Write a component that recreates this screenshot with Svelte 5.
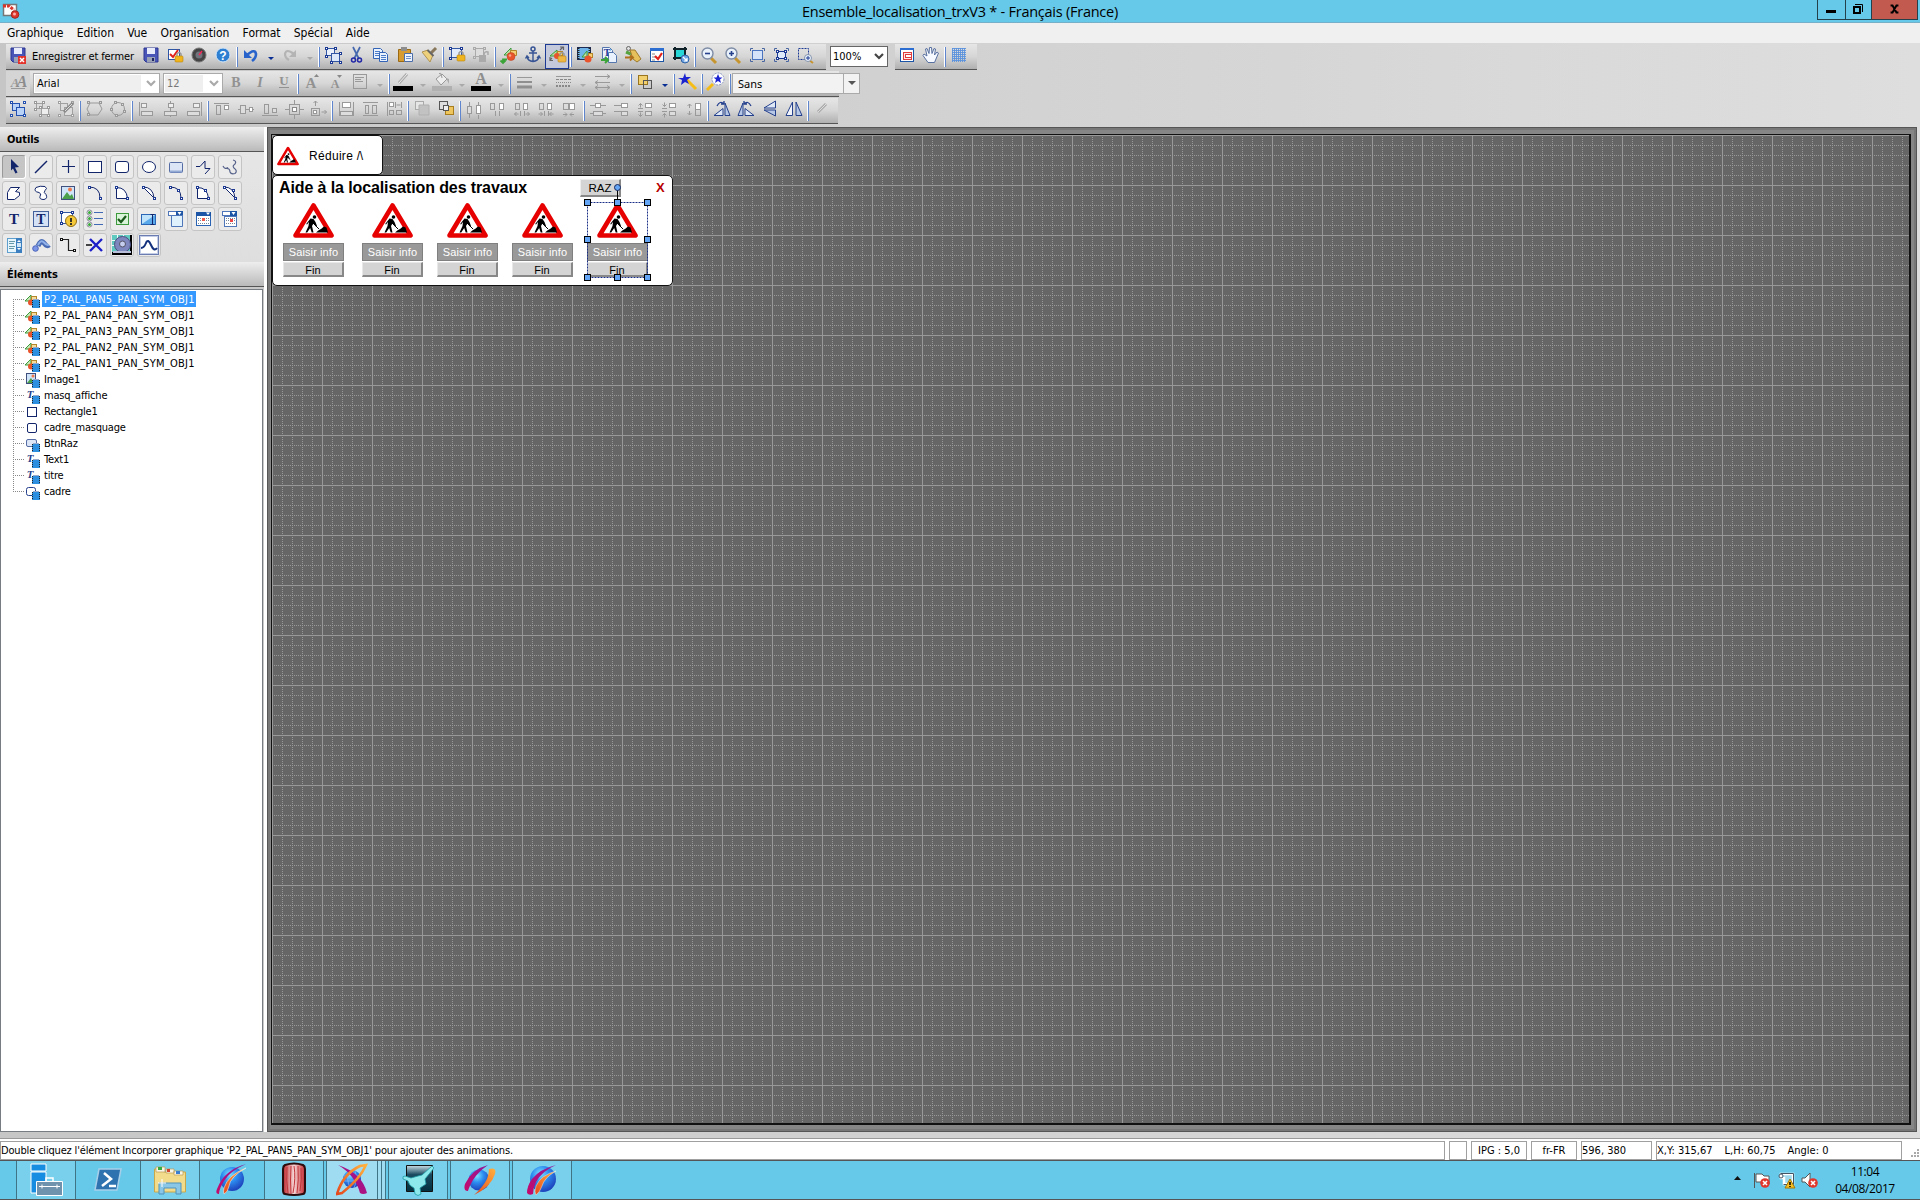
<script>
  const P = '#1c3a94';
  const sq = (x, y, s = 3, c = P, f = '#fff') => `<rect x="${x + 0.5}" y="${y + 0.5}" width="${s - 1}" height="${s - 1}" fill="${f}" stroke="${c}"/>`;
  const box = (x, y, w, h, c = '#999', f = 'none') => `<rect x="${x + 0.5}" y="${y + 0.5}" width="${w - 1}" height="${h - 1}" fill="${f}" stroke="${c}"/>`;
  const ln = (d, c = '#999', w = 1, x = '') => `<path d="${d}" fill="none" stroke="${c}" stroke-width="${w}" ${x}/>`;
  const fl = (d, c, s = 'none') => `<path d="${d}" fill="${c}" stroke="${s}"/>`;
  const lock = (x, y, c = '#f0b41c') => `<path d="M${x + 2} ${y + 3}v-2q2-3 4 0v2" fill="none" stroke="#999" stroke-width="1.5"/><rect x="${x}" y="${y + 3}" width="8" height="6" rx="1" fill="${c}" stroke="#b98512" stroke-width=".6"/>`;
  const floppy = fl('M5 5h14v14H7l-2-2z', '#4a55b8', '#2d3690') + fl('M8 5h8v6H8z', '#e8ecfa') + fl('M8 14h8v5H8z', '#9aa3b5') + fl('M13 15h2v3h-2z', '#1f2460');
  const shapes = fl('M7 12l7-7v7z', '#b9e0a5', '#3d9a3d') + fl('M13.500 7.500h6v5h-6z', '#f5cf72', '#b3862a') + '<circle cx="14" cy="13.500" r="4" fill="#e8542c" stroke="#b93c1e" stroke-width=".5"/><circle cx="13" cy="12.500" r="1.300" fill="#f9a58e"/>';
  const lens = (s) => '<path d="M14 15l5 5" stroke="#c7952f" stroke-width="3"/><circle cx="10.500" cy="10.500" r="5.500" fill="#e9f1fb" stroke="#7d8ba5" stroke-width="1.400"/>' + ln(s, '#25408c', 1.6);
  const glyph = (t, x, y, s, c, e = '') => `<text x="${x}" y="${y}" font-size="${s}" fill="${c}" text-anchor="middle" font-family="Liberation Serif, serif" font-weight="bold" ${e}>${t}</text>`;
  const corners = (a, b, s, c = P) => sq(a, a, s, c) + sq(b, a, s, c) + sq(a, b, s, c) + sq(b, b, s, c);
  const groupIco = (c, f) => box(6, 6, 8, 8, c, f) + box(10, 10, 9, 9, c, f) + corners(4, 17, 3, c);
  const copyIco = box(5, 5, 9, 8, '#3457a3', '#eaf1fc') + box(10, 10, 9, 9, '#3457a3', '#dde8fa') + sq(4, 4) + sq(13, 4) + sq(4, 12) + sq(18, 9) + sq(9, 18) + sq(18, 18);

  const icons = {
    drop: fl('M5 14h6l-3 3z', '#0a2f94'),
    dropOff: fl('M5 14h6l-3 3z', '#a9a9a9'),
    saveClose: floppy + fl('M12 13h8v8h-8z', '#e3342b') + ln('M14 15l4 4m0-4l-4 4', '#fff', 1.5),
    save: floppy,
    checkLock: box(5, 6, 12, 11, '#2d56a5', '#fff') + ln('M7 11l3 3 5-7', '#e0221b', 2) + lock(12, 10),
    gauge: '<circle cx="12" cy="12" r="7" fill="#444" stroke="#777"/><circle cx="12" cy="12" r="3.500" fill="#70747c"/>' + ln('M12 12l3-4', '#f25', 1.3),
    help: '<circle cx="12" cy="12" r="7" fill="#2e7fd1" stroke="#d5e6f7"/><text x="12" y="16.500" font-size="12" font-weight="bold" fill="#fff" text-anchor="middle" font-family="Liberation Sans">?</text>',
    undo: ln('M8 12q8-7 9-1 0 4-4 7', '#2863cc', 2.6) + fl('M5 7v8h8z', '#2863cc'),
    redo: ln('M16 11q-8-6-9 0 0 4 4 6', '#b4b4b4', 2.2) + fl('M18 7v7h-7z', '#b4b4b4'),
    group: copyIco,
    cut: ln('M8 4l6 12M15 4L9 16', '#4567ae', 1.7) + '<circle cx="8.500" cy="17" r="2" fill="none" stroke="#2328a6" stroke-width="1.500"/><circle cx="14.500" cy="17" r="2" fill="none" stroke="#2328a6" stroke-width="1.500"/>',
    copy: fl('M4.500 5.500h7l2 2v8h-9z', '#eaf2fd', '#3464b5') + fl('M10.500 9.500h6l2 2v7h-8z', '#eaf2fd', '#3464b5') + ln('M6 8.500h5m-5 2h4m-4 2h4m2 0h5m-5 2h5m-5 2h5', '#4a7cc9'),
    paste: fl('M5.500 6.500h12v12h-12z', '#d69b31', '#9a6914') + fl('M8 4h6v4H8z', '#8d8d8d') + fl('M11.500 10.500h8v8h-8z', '#eef4fd', '#4b6ea9') + ln('M13 13.500h5m-5 2h5', '#6d8fc9'),
    brush: ln('M19 5l-5 5', '#88775a', 3) + fl('M5 9l6-2 5 5-3 7z', '#ecd07c', '#b09352') + ln('M10.500 7l6 6', '#666', 2),
    lockObj: box(6, 5, 11, 10, '#3457a3', '#e2ebfb') + sq(4, 4) + sq(15, 4) + sq(4, 14) + lock(12, 9),
    unlockObj: box(6, 5, 9, 9, '#aaa', '#ddd') + sq(4, 4, 3, '#aaa', '#ddd') + sq(14, 4, 3, '#aaa', '#ddd') + sq(4, 13, 3, '#aaa', '#ddd') + fl('M10 12h7v7h-7z', '#aaa') + ln('M15 12q0-4 4-3v3', '#aaa', 1.5),
    insShape: shapes + ln('M10 16.500H6v3m-2.500-2l2.500 2.500 2.500-2.500', '#3ba438', 1.8),
    anchor: '<circle cx="12" cy="6" r="2" fill="none" stroke="#365394" stroke-width="1.500"/>' + ln('M12 8v10M8 10h8M6 14q1 4 6 4.500 5-.5 6-4.500M4.500 15.500l1.500-2.500 2 2m11.500.5L18 13l-2 2', '#365394', 1.4),
    linkShape: fl('M5 13l7-6v6z', '#b9e0a5', '#3d9a3d') + box(12, 8, 6, 5, '#b3862a', '#f5cf72') + '<circle cx="12" cy="13" r="3" fill="#e8542c"/>' + ln('M15 7l3-3m-3 0h3.500v3M7 15l-2 2m0-3v3.500h3', '#666', 1.2) + lock(13, 10, '#eeb643'),
    film: box(4, 4, 14, 13, '#1c2c54', '#6fb4e8') + ln('M5.500 5v12M16.500 5v12', '#222', 2, 'stroke-dasharray="1 1"') + fl('M9 14l5-6v6z', '#b9e0a5', '#3d9a3d') + box(15, 10, 5, 5, '#b3862a', '#f5cf72') + '<circle cx="15" cy="16" r="3.500" fill="#e8542c"/>',
    docs: fl('M5.500 4.500h7l3 3v8h-10z', '#eaf2fd', '#5577ad') + fl('M11.500 9.500h5l3 3v7h-8z', '#eaf2fd', '#5577ad') + glyph('T', 10, 13, 10, P) + ln('M4 17h6m-2-3l3 3-3 3', '#3ba438', 2),
    tags: '<circle cx="7.500" cy="5.500" r="2" fill="none" stroke="#666"/>' + ln('M5 9l5 2', '#57a33e', 3) + fl('M9 7l5 0 6 9-4 3-4-3z', '#e6c05a', '#9d7a2f') + ln('M4 14.500h7m-2-2l3 2-3 3', '#b06f1b', 1.8),
    checkWin: box(5, 5, 14, 14, '#1c55a5', '#fff') + fl('M5 5h14v3H5z', '#2b6dd0') + ln('M7 11h3m-3 3h3m-3 3h3', '#888') + ln('M10 13l3 3 4-6', '#e0221b', 2.2),
    capture: fl('M6 6h10v9H6z', '#27d6d6') + ln('M4 6h14M6 4v13M16 4v9M4 15h10', '#10222a', 2) + '<circle cx="16" cy="16" r="4" fill="#6fa7e6" stroke="#3363a5"/>' + ln('M14 14l4 4m0-3v3h-3', '#fff', 1.2),
    zoomOut: lens('M8 10.500h5'),
    zoomIn: lens('M8 10.500h5M10.500 8v5'),
    fit: box(7, 7, 11, 10, '#4a74bd', '#d3e2f8') + ln('M5.500 8V5.500H8m9 0h2.500V8m0 8v2.500H17m-9 0H5.500V16', '#4a66a0'),
    fitSel: box(8, 8, 9, 8, P, '#dfeafa') + sq(7, 7) + sq(15, 7) + sq(7, 14) + sq(15, 14) + ln('M5.500 8V5.500H8m9 0h2.500V8m0 8v2.500H17m-9 0H5.500V16', '#4a66a0'),
    zoomArea: ln('M5.500 5.500h10v11h-10z', P, 1, 'stroke-dasharray="2 1"') + ln('M16 17l4 3', '#c7952f', 2) + '<circle cx="15" cy="15" r="3.500" fill="#e9f1fb" stroke="#8593ab"/>' + ln('M13 15h4m-2-2v4', P),
    winRed: box(5, 5, 14, 14, '#1c55a5', '#fff') + fl('M5 5h14v2H5z', '#2b6dd0') + box(8, 9, 9, 8, '#e03a3a', '#fde8e8') + box(10, 11, 7, 4, '#e03a3a', '#fff'),
    hand: fl('M9 19.500l-5-7 1-1.500 3 2-1.500-7 1.500-.5 2 5 .5-6h2l.5 6 2-5 1.500.5-1 6 2.500-3 1.500 1-4 9.500z', '#f6f9ff', '#58709f'),
    mesh: '<path d="M5.500 5v14m2-14v14m2-14v14m2-14v14m2-14v14m2-14v14m2-14v14M5 5.500h14m-14 2h14m-14 2h14m-14 2h14m-14 2h14m-14 2h14m-14 2h14" stroke="#5b92dc" stroke-width=".9"/>',
    fontA: glyph('A', 9, 17, 13, '#999', 'font-style="italic"') + glyph('A', 16, 17, 16, '#8c8c8c', 'font-style="italic"') + ln('M5 18.500h14'),
    B: glyph('B', 12, 16.5, 14, '#929292'), I: glyph('I', 12, 16.5, 14, '#929292', 'font-style="italic"'), U: glyph('U', 12, 15, 13, '#929292') + ln('M7 17.500h10', '#929292'),
    bigger: glyph('A', 11, 18, 15, '#929292') + fl('M14 7h5l-2.500-3z', '#888'), smaller: glyph('A', 11, 18, 12, '#929292') + fl('M13 5h5l-2.500 3z', '#888'),
    align: box(5, 4, 14, 15) + ln('M7 7.500h9m-9 2h6m-6 2h8', '#999'),
    pen: ln('M8 13l8-9', '#aaa', 3) + ln('M8 13l8-9', '#eee') + fl('M2 16h20v5H2z', '#000'),
    fill: fl('M6 9l6-5 5 5-6 6z', '#eee', '#999') + ln('M9 4q2-3 3 4', '#999') + fl('M16 8l3 1v5z', '#aaa') + fl('M2 16h20v5H2z', '#b0b0b0'),
    ink: glyph('A', 12, 14, 16, '#8e8e8e') + fl('M2 16h20v5H2z', '#000'),
    lines: ln('M5 7.500h15') + ln('M5 12h15', '#8f8f8f', 2) + ln('M5 17h15', '#8f8f8f', 3),
    dashes: ln('M5 6.500h15') + ln('M5 9.500h15', '#888', 1, 'stroke-dasharray="3 1"') + ln('M5 12.500h15', '#888', 1, 'stroke-dasharray="1 1"') + ln('M5 16h15', '#888', 2, 'stroke-dasharray="2 1"'),
    arrows: ln('M5 6.500h15m-3-2l3 2-3 2M20 12.500H5m3-2l-3 2 3 2m-3 3h15m-12-2l-3 2 3 2m9-4l3 2-3 2'),
    layers: box(10, 10, 9, 9, '#555', '#ccc') + box(5, 5, 10, 10, '#9a7520', '#f2d06e') + box(10, 10, 9, 9, '#555'),
    wand: ln('M10 9l10 10', '#f6bd16', 3) + fl('M9 3l1 4 5 0-4 3 2 4-4-2-4 3 1-5-4-2h5z', '#1a23cf'),
    find: ln('M9 14l-6 6', '#f3bb18', 3) + '<circle cx="14" cy="9" r="6" fill="#fff" stroke="#8794c0" stroke-dasharray="2 1"/>' + fl('M14 4l1.500 3.500h3l-2.500 2 1 3.500-3-2-3 2 1-3.500-2.500-2h3z', '#1a23cf'),
    groupSel: groupIco('#2450b0', '#b9d2f8'),
    ungroup: box(6, 6, 7, 6, '#a0a0a0', '#ddd') + box(11, 11, 8, 7, '#a0a0a0', '#eee') + sq(4, 4, 3, '#999') + sq(12, 4, 3, '#999') + sq(4, 11, 3, '#999') + sq(9, 9, 3, '#999') + sq(17, 9, 3, '#999') + sq(9, 17, 3, '#999') + sq(17, 17, 3, '#999'),
    editGroup: groupIco('#a0a0a0', '#ddd') + ln('M10 15l9-9', '#888', 3) + ln('M11 14l7-7', '#ddd'),
    poly1: ln('M8 6h9l3 6-4 6H8l-3-6z') + sq(5, 4, 3, '#999', '#ddd') + sq(17, 4, 3, '#999', '#ddd') + sq(5, 16, 3, '#999', '#ddd'),
    poly2: '<circle cx="12" cy="12" r="6.500" fill="none" stroke="#999"/>' + sq(8, 4, 3, '#999', '#ddd') + sq(15, 6, 3, '#999', '#ddd') + sq(17, 13, 3, '#999', '#ddd') + sq(4, 11, 3, '#999', '#ddd') + sq(9, 17, 3, '#999', '#ddd'),
    alL: ln('M5.500 5v14') + box(7, 6, 6, 5, '#999', '#eee') + box(7, 14, 12, 5, '#999', '#ddd'),
    alC: ln('M12.500 4v16') + box(10, 6, 6, 5, '#999', '#eee') + box(6, 14, 13, 5, '#999', '#ddd'),
    alR: ln('M19.500 5v14') + box(11, 6, 7, 5, '#999', '#eee') + box(5, 14, 13, 5, '#999', '#ddd'),
    alT: ln('M4 6.500h15') + box(6, 8, 5, 10) + box(14, 8, 5, 5, '#999', '#fff'),
    alM: ln('M4 12.500h16') + box(6, 8, 6, 9, '#999', '#ddd') + box(15, 10, 4, 5, '#999', '#fff'),
    alB: ln('M4 18.500h16') + box(6, 7, 5, 10) + box(14, 11, 5, 5, '#999', '#ddd'),
    center: box(7, 7, 11, 11) + box(10, 10, 5, 5, '#888', '#fff') + ln('M12.500 3v4m0 11v4M3 12.500h4m11 0h4'),
    moveTo: box(5, 11, 9, 8) + box(7, 13, 4, 4, '#999', '#fff') + ln('M9.500 9V4m-2 2l2-2 2 2m4 9h5m-2-2l2 2-2 2'),
    sameW: ln('M5.500 5v14m14-14v14') + box(8, 5, 9, 6, '#999', '#fff') + box(6, 14, 13, 5, '#999', '#ddd'),
    sameH: ln('M5 5.500h15m-15 13h15') + box(7, 8, 4, 9) + box(14, 8, 5, 9),
    sameB: ln('M5.500 5v14') + box(7, 5, 5, 5, '#999', '#fff') + box(7, 13, 5, 5) + box(14, 13, 6, 5) + ln('M13.500 5v6m6-6v6m-5-3h4'),
    front: box(5, 4, 9, 9, '#aaa', '#e6e6e6') + fl('M9 8h10v10H9z', '#c2c2c2', '#b0b0b0'),
    back: box(5, 4, 9, 9, '#555', '#ddd') + box(11, 9, 9, 9, '#a87d1d', '#efc55d') + box(9, 8, 6, 6, '#555', '#eee'),
    h1: ln('M7.500 5v4m0 8v4m9-16v3m0 10v4') + box(5, 9, 5, 8, '#999', '#ddd') + box(14, 8, 5, 9, '#999', '#fff'),
    h2: box(4, 6, 5, 7) + box(13, 6, 5, 7, '#999', '#fff') + ln('M9.500 14v5m4-5v5'),
    h3: box(5, 6, 5, 7) + box(13, 6, 5, 7, '#999', '#fff') + ln('M10.500 14v5m4-5v5m-10-2h4m-2-2l-2 2 2 2m13-2h-4m2-2l2 2-2 2'),
    h4: box(5, 6, 5, 7) + box(13, 6, 5, 7, '#999', '#fff') + ln('M10.500 14v5m4-5v5m-10-2h4m-2-2l2 2-2 2m13-2h-4m2-2l-2 2 2 2'),
    h5: box(5, 6, 6, 7) + box(11, 6, 6, 7, '#999', '#fff') + ln('M5 17.500h4m-2-2l2 2-2 2m9-2h-4m2-2l-2 2 2 2'),
    v1: ln('M4 8.500h16M4 16.500h16') + box(9, 6, 6, 5, '#999', '#fff') + box(7, 14, 10, 5, '#999', '#ddd'),
    v2: ln('M4 8.500h7m-7 6h7') + box(11, 6, 7, 5, '#999', '#fff') + box(11, 14, 7, 5, '#999', '#ddd'),
    v3: ln('M4 11.500h5m-5 3h5m-2.500-8v4m-2-2l2-2 2 2m-2 7v4m-2-2l2 2 2-2') + box(11, 6, 7, 5, '#999', '#fff') + box(11, 14, 7, 5, '#999', '#ddd'),
    v4: ln('M4 11.500h5m-5 3h5m-2.500-9v4m-2-2l2 2 2-2m-2 9v4m-2-2l2-2 2 2') + box(11, 6, 7, 5, '#999', '#fff') + box(11, 14, 7, 5, '#999', '#ddd'),
    v5: ln('M7.500 7v4m-2-2l2-2 2 2m-2 5v4m-2-2l2 2 2-2') + box(13, 6, 6, 7, '#999', '#fff') + box(13, 12, 6, 7),
    rotL: fl('M4 18.500h9l0-7z', '#dfe8f7', '#25408c') + fl('M15 6v12.500h5z', '#b6c8e6', '#25408c') + ln('M7 9q3-6 7-2m-3 0h3V4', '#25408c', 1.3),
    rotR: fl('M11 18.500h9l-9-7z', '#dfe8f7', '#25408c') + fl('M9 6v12.500H4z', '#b6c8e6', '#25408c') + ln('M17 9q-3-6-7-2m3 0h-3V4', '#25408c', 1.3),
    flipV: fl('M17.500 4v7H6z', '#dfe8f7', '#25408c') + fl('M17.500 19v-6H6z', '#b6c8e6', '#25408c'),
    flipH: fl('M10.500 5v13.500H4z', '#f2f6fc', '#25408c') + fl('M14 5v13.500h6z', '#b6c8e6', '#25408c'),
    pencil: ln('M8 15l8-8', '#aaa', 3) + ln('M8 15l8-8', '#ddd'),
    cursor: fl('M9 4l8 8-4 .5 2.500 5-2 1-2.500-5-2 2z', '#12256b'),
    line: ln('M6 18L18 6', '#12256b', 1.4), plus: ln('M6 11.500h13M12.500 5v13', '#12256b', 1.2),
    rect: box(5, 6, 14, 12, '#12256b', '#fff'), rrect: '<rect x="5.500" y="6.500" width="13" height="11" rx="2.500" fill="#fff" stroke="#12256b"/>',
    oval: '<ellipse cx="12" cy="12" rx="6.500" ry="5.500" fill="#fff" stroke="#12256b"/>',
    btn: '<rect x="5.500" y="7.500" width="13" height="10" rx="1" fill="#dbe5f5" stroke="#556ca5"/>' + ln('M6 16.500h12', '#93a8d2', 2),
    zig: ln('M5 11.500h4l5-5.500v7.500h5l-5 5.500', '#12256b'),
    squig: ln('M5 11q2 4 5 1.500M15 5q4 1 2 4-3 2-1 4 4 3 1 5.500-4 1-5-1.500 0-4-4-3.500', '#56618a', 1.2),
    poly: fl('M8.500 6.500h9l-4 4 4 1v3l-5 4h-7v-7z', '#fff', '#12256b'),
    blob: fl('M7 6.500q4-2 9-1 3 2 0 4-2 2 1 4 2 4-2 5-5 0-4-3 2-3-1-4-6-1-3-5z', '#fff', '#12256b'),
    image: box(5, 5, 14, 14, '#40507e', '#cfe3f9') + fl('M6 18l5-7 3 4 2-2 2 5z', '#4aa04a') + '<circle cx="14" cy="8.500" r="2" fill="#ef7b4b"/>',
    arc: ln('M6 6q11 0 11 11', '#12256b') + sq(5, 5) + sq(16, 16),
    pie: fl('M6.500 6.500q10 0 11 11h-11z', '#fff', '#12256b') + sq(5, 5) + sq(16, 16),
    chord: fl('M6 6q10 0 11 11z', '#fff', '#12256b') + sq(5, 5) + sq(16, 16),
    arc2: ln('M6 6q11 0 11 11', '#12256b') + sq(5, 5) + sq(16, 16) + sq(13, 8),
    pie2: fl('M6.500 6.500q10 0 11 11h-11z', '#fff', '#12256b') + sq(5, 5) + sq(16, 16) + sq(13, 8),
    chord2: fl('M6 6q10 0 11 11z', '#fff', '#12256b') + sq(5, 5) + sq(16, 16) + sq(14, 8),
    text: glyph('T', 12, 17, 15, '#12256b'), textBox: box(4, 4, 16, 16, '#45619c', '#d5e2f6') + glyph('T', 12, 17, 14, '#12256b'),
    warn: box(5, 5, 12, 12, '#3457a3', '#fff') + sq(4, 4) + sq(15, 4) + sq(4, 15) + '<circle cx="15" cy="14" r="5.500" fill="#f5c93a" stroke="#8f6d13"/>' + ln('M15 11v4m0 1v2', '#222', 1.8),
    radios: [5.5, 11.5, 17.5].map((y) => `<circle cx="6.500" cy="${y}" r="2.500" fill="#fff" stroke="#889"/><circle cx="6.500" cy="${y}" r="1.500" fill="#35a835"/>` + ln(`M11 ${y}h9`, '#3f69b5')).join(''),
    check: box(6, 6, 13, 12, '#3c9a3c', '#d9f4d9') + ln('M8 12l3 3 5-6', '#1c5a1c', 2.2),
    input: box(4, 7, 15, 11, '#2a66b5', '#bfe3fb') + fl('M5 17l13-9v9z', '#5aa9ea') + ln('M15.500 8v9m-2-9.500h4m-4 10h4', '#12256b'),
    combo: box(4, 4, 15, 5, '#4e76b8', '#fff') + fl('M12 4h7v5h-7z', '#1c55a5') + fl('M13.500 5h4l-2 3z', '#fff') + fl('M7.500 8.500h11v11h-11z', '#dff1fc', '#4e76b8'),
    date: box(5, 5, 15, 14, '#2a62b4', '#fff') + fl('M5 5h15v4H5z', '#1c55a5') + fl('M15 5.500h4l-2 2.500z', '#fff') + ln('M7 11.500h11m-11 2h11m-11 3h11', '#789', 1, 'stroke-dasharray="1 1"') + fl('M11 11h3v3h-3z', '#f05a4a'),
    dateCombo: box(4, 4, 15, 5, '#4e76b8', '#fff') + fl('M12 4h7v5h-7z', '#1c55a5') + fl('M13.500 5h4l-2 3z', '#fff') + box(6, 9, 13, 11, '#4e76b8', '#fff') + ln('M8 11.500h10m-10 2h10m-10 3h10', '#789', 1, 'stroke-dasharray="1 1"') + fl('M12 12h3v3h-3z', '#e44'),
    list: box(5, 5, 15, 15, '#5f9fcd', '#e7f5fd') + ln('M7 8.500h6m-6 2h5m-5 3h6m-6 2h5', '#69a') + fl('M14 5h6v15h-6z', '#3c7fc0') + fl('M15 10h4v4h-4z', '#cfe6f7') + fl('M15 9l2-2 2 2zm0 6l2 2 2-2z', '#fff'),
    pipe: ln('M9 13q3-7 6-3t5 2', '#4a6cb5', 5) + ln('M9 12q3-6 6-2.500t5 2', '#8fb0e8', 2) + '<circle cx="6.500" cy="15.500" r="2.800" fill="#7b95e8" stroke="#4a63b8"/>',
    connector: ln('M7 6.500h5.500v11H17', '#222', 1.2) + sq(4, 5, 3, '#111') + sq(17, 16, 3, '#111'),
    cross: ln('M7 6l12 12M19 6L7 18', '#1d20c9', 2.4) + ln('M3 12h6', '#444', 2),
    dial: fl('M2 2h20v20H2z', '#000') + fl('M2 2h18v17H2z', '#5fc9c0') + ln('M2 7.500h18M2 12.500h18M7.500 2v17M13.500 2v17', '#e9fffb') + '<circle cx="12.500" cy="11.500" r="8" fill="#7d86bd" stroke="#4a4f80"/><circle cx="12.500" cy="11" r="3" fill="#c6ceef" stroke="#556"/><path d="M3 19h18" stroke="#b9bfd9" stroke-width="2"/>',
    curve: box(2, 2, 20, 20, '#6b7db0', '#fff') + box(3, 3, 18, 18, '#c3cde6') + ln('M4 15q3 0 5-5t5 2 6 3', '#12307c', 2)
  };

  const sep = '|';
  const row1a = 'save checkLock gauge help | undo drop redo dropOff | group cut copy paste brush | lockObj unlockObj | insShape anchor *linkShape | film docs tags checkWin capture | zoomOut zoomIn fit fitSel zoomArea'.split(' ');
  const row1b = 'winRed hand | mesh'.split(' ');
  const row2 = 'B I U | bigger smaller align dropOff | pen dropOff fill dropOff ink dropOff | lines dropOff dashes dropOff arrows dropOff | layers drop | wand | find |'.split(' ');
  const row3 = 'groupSel ungroup editGroup | poly1 poly2 | alL alC alR | alT alM alB center moveTo | sameW sameH sameB | front back | h1 h2 h3 h4 h5 | v1 v2 v3 v4 v5 | rotL rotR flipV flipH | pencil'.split(' ');
  const tools = 'cursor line plus rect rrect oval btn zig squig poly blob image arc pie chord arc2 pie2 chord2 text textBox warn radios check input combo date dateCombo list pipe connector cross dial curve'.split(' ');
  const menus = ['Graphique', 'Edition', 'Vue', 'Organisation', 'Format', 'Spécial', 'Aide'];

  const badge = fl('M10 9h8v8h-8z', '#2d8fe0') + ln('M10.500 9v8m7-8v8', '#222', 1, 'stroke-dasharray="1 1"') + ln('M11 8.500h6', '#9ac');
  const kinds = {
    sym: fl('M3 10l6-6v6z', '#c5e6b5', '#3d9a3d') + box(9, 5, 6, 5, '#b3862a', '#f5dc9a') + '<circle cx="9" cy="11.500" r="3" fill="#e8542c"/>' + badge,
    img: box(4, 2, 10, 11, '#40507e', '#cfe3f9') + fl('M5 12l4-5 3 5z', '#4aa04a') + '<circle cx="11" cy="5" r="1.500" fill="#ef7b4b"/>' + badge,
    txt: glyph('T', 8, 11, 11, '#25408c', 'font-style="italic"') + badge,
    rect: box(5, 4, 10, 10, '#12256b', '#fff'),
    rrect: '<rect x="5.500" y="4.500" width="9" height="9" rx="1.500" fill="#fff" stroke="#12256b"/>',
    btn: '<rect x="4.500" y="4.500" width="10" height="7" rx="1.500" fill="#dce6f6" stroke="#556ca5"/>' + badge,
    frame: '<rect x="4.500" y="4.500" width="9" height="8" rx="2" fill="#fff" stroke="#25408c"/>' + badge
  };
  const elements = [
    ['sym', 'P2_PAL_PAN5_PAN_SYM_OBJ1'], ['sym', 'P2_PAL_PAN4_PAN_SYM_OBJ1'], ['sym', 'P2_PAL_PAN3_PAN_SYM_OBJ1'],
    ['sym', 'P2_PAL_PAN2_PAN_SYM_OBJ1'], ['sym', 'P2_PAL_PAN1_PAN_SYM_OBJ1'], ['img', 'Image1'], ['txt', 'masq_affiche'],
    ['rect', 'Rectangle1'], ['rrect', 'cadre_masquage'], ['btn', 'BtnRaz'], ['txt', 'Text1'], ['txt', 'titre'], ['frame', 'cadre']
  ];
  const panels = [11, 90, 165, 240, 315];
  const handles = [0, 30, 60].flatMap((x) => [0, 37, 75].map((y) => [x, y])).filter(([x, y]) => x !== 30 || y !== 37);
</script>

{#snippet bar(items)}
  {#each items as it}
    {#if it === sep}
      <i class="sep"></i>
    {:else}
      <span class="slot" class:narrow={it.startsWith('drop')} class:pressed={it[0] === '*'}>
        <svg viewBox="0 0 {it.startsWith('drop') ? 15 : 24} 24">{@html icons[it.replace('*', '')]}</svg>
      </span>
    {/if}
  {/each}
{/snippet}

{#snippet sign()}
  <svg class="sign" viewBox="0 0 41 35">
    <path d="M20.500 2.500L38.500 32.500H2.500z" fill="#fff" stroke="#e60000" stroke-width="4.600" stroke-linejoin="round" />
    <circle cx="21.500" cy="14" r="1.800" />
    <path d="M17.500 15.500l3 .5 2 3 1.500 4-1 .5-2.500-3-1.500 2.500 1.500 6.500h-1.800l-1.500-4.500-3 4.500h-1.700l3-6.500.5-4-2 2.500-.8-.5z" />
    <path d="M20 20l6 6" stroke="#000" />
    <path d="M23 29.500l3-2.500 2-1 3-2.500 2.500 1 1.500 5z" />
  </svg>
{/snippet}

<div class="app">
  <header class="titlebar">
    <svg class="appicon" width="18" height="16" viewBox="0 0 18 16"><path d="M1.500 1.500h13v11h-13z" fill="#fff" stroke="#777" stroke-width="1.500" /><path d="M1 3h6l5 4" stroke="#d8352b" stroke-width="3" stroke-dasharray="3 1" fill="none" /><circle cx="13" cy="11.500" r="3.800" fill="#e0352b" stroke="#9d2922" /><circle cx="12.500" cy="11" r="1.500" fill="#f7b0aa" /></svg>
    <span class="title">Ensemble_localisation_trxV3 * - Français (France)</span>
    <div class="winbtns">
      <span class="wb min"><svg viewBox="0 0 27 19"><path d="M8 10h10v3H8z" /></svg></span>
      <span class="wb res"><svg viewBox="0 0 25 19"><path d="M8 7h6v6H8z" fill="none" stroke="#000" stroke-width="2" /><path d="M9 4.500h7.500V12" fill="none" stroke="#000" /></svg></span>
      <span class="wb close"><svg viewBox="0 0 46 19"><path d="M19 5.500h2l4 7h2m-8 0h2l4-7h2" fill="none" stroke="#000" stroke-width="2" /></svg></span>
    </div>
  </header>

  <nav class="menubar">{#each menus as m}<span>{m}</span>{/each}</nav>

  <section class="toolbars">
    <div class="row">
      <div class="strip">
        {@render bar(['saveClose'])}
        <span class="label">Enregistrer et fermer</span>
        {@render bar(row1a)}
        <i class="tail"></i>
      </div>
      <div class="zoom">100%<svg width="10" height="8" viewBox="0 0 10 8"><path d="M1 1l4 4 4-4" fill="none" stroke="#444" stroke-width="2.200" /></svg></div>
      <div class="strip">{@render bar(row1b)}<i class="tail6"></i></div>
    </div>
    <div class="row">
      <div class="strip second">
        <span class="fa">{@render bar(['fontA'])}</span>
        <div class="sel font"><b>Arial</b><svg width="10" height="8" viewBox="0 0 10 8"><path d="M1 1l4 4 4-4" fill="none" stroke="#aaa" stroke-width="2.200" /></svg></div>
        <div class="sel size"><b>12</b><svg width="10" height="8" viewBox="0 0 10 8"><path d="M1 1l4 4 4-4" fill="none" stroke="#aaa" stroke-width="2.200" /></svg></div>
        {@render bar(row2)}
        <div class="lang"><span>Sans</span><i><svg width="8" height="5" viewBox="0 0 8 5"><path d="M0 0h8L4 4z" fill="#555" /></svg></i></div>
      </div>
    </div>
    <div class="row"><div class="strip third">{@render bar(row3)}</div></div>
  </section>

  <main>
    <aside>
      <h2>Outils</h2>
      <div class="tools">
        {#each tools as t, i}<span class="tool" class:on={i === 0}><svg viewBox="0 0 24 24">{@html icons[t]}</svg></span>{/each}
      </div>
      <h2>Éléments</h2>
      <div class="tree">
        {#each elements as [k, name], i}
          <div class="node" class:wide={k === 'sym'} class:last={i === elements.length - 1} class:first={i === 0}>
            <i class="branch"></i><svg width="20" height="18" viewBox="0 0 20 18">{@html kinds[k]}</svg><span class:picked={i === 0}>{name}</span>
          </div>
        {/each}
      </div>
    </aside>
    <div class="frame">
      <div class="canvas">
        <svg class="grid" width="1637" height="988">
          <defs>
            <pattern id="minor" width="10" height="10" patternUnits="userSpaceOnUse">
              <path d="M0 .5h10M.5 0v10" stroke="#999" stroke-dasharray="1 1" />
            </pattern>
            <pattern id="major" width="50" height="50" patternUnits="userSpaceOnUse">
              <path d="M0 .5h50M.5 0v50" stroke="#999" />
            </pattern>
          </defs>
          <rect width="1637" height="988" fill="url(#minor)" />
          <rect width="1637" height="988" fill="url(#major)" />
        </svg>
        <div class="card reduce"><span class="small">{@render sign()}</span><span>Réduire <i class="caret">/\</i></span></div>
        <div class="card panel">
          <strong>Aide à la localisation des travaux</strong>
          <span class="raz">RAZ</span>
          <b class="x">X</b>
          {#each panels as left}
            <div class="item" style="left:{left - 1}px">
              {@render sign()}
              <span class="info">Saisir info</span>
              <span class="fin">Fin</span>
            </div>
          {/each}
          <svg class="selection" width="68" height="100" viewBox="-4 -19 68 100">
            <path d="M30.500 -12V0" stroke="#000" />
            <rect x=".5" y=".5" width="60" height="75" fill="none" stroke="#1b2f86" stroke-dasharray="2 1" />
            <circle cx="30.500" cy="-14.500" r="3" fill="#64a5f5" stroke="#14285c" />
            {#each handles as [x, y]}<rect x={x - 2.5} y={y - 2.5} width="6" height="6" fill="#64a5f5" stroke="#000" />{/each}
          </svg>
        </div>
      </div>
    </div>
  </main>

  <footer class="status">
    <span class="cell msg">Double cliquez l'élément Incorporer graphique 'P2_PAL_PAN5_PAN_SYM_OBJ1' pour ajouter des animations.</span>
    <span class="cell c1"></span>
    <span class="cell c2">IPG : 5,0</span>
    <span class="cell c3">fr-FR</span>
    <span class="cell c4">596, 380</span>
    <span class="cell c5"><span>X,Y: 315,67</span><span>L,H: 60,75</span><span>Angle: 0</span></span>
    <svg class="grip" width="9" height="9" viewBox="0 0 9 9"><path d="M6 0h2v2H6zM3 3h2v2H3zM6 3h2v2H6zM0 6h2v2H0zM3 6h2v2H3zM6 6h2v2H6z" fill="#aaa" /></svg>
  </footer>

  <div class="taskbar">
    <svg width="0" height="0" class="defs"><defs>
      <radialGradient id="orb" cx=".4" cy=".3" r=".8"><stop offset="0" stop-color="#7ee3ff" /><stop offset=".4" stop-color="#2d8df0" /><stop offset="1" stop-color="#1a2fae" /></radialGradient>
      <linearGradient id="hot" x1="0" y1="1" x2="1" y2="0"><stop offset="0" stop-color="#c50a6b" /><stop offset="1" stop-color="#8d1a9c" /></linearGradient>
      <linearGradient id="warm" x1="0" y1="1" x2="1" y2="0"><stop offset="0" stop-color="#e6491c" /><stop offset="1" stop-color="#ffb13d" /></linearGradient>
      <linearGradient id="red" x1="0" x2="1"><stop offset="0" stop-color="#b9262c" /><stop offset=".5" stop-color="#f7d9d9" /><stop offset="1" stop-color="#c0282e" /></linearGradient>
      <linearGradient id="teal" x1="0" y1="0" x2="0" y2="1"><stop offset="0" stop-color="#c9dde5" /><stop offset=".35" stop-color="#1a4a60" /><stop offset="1" stop-color="#02303f" /></linearGradient>
    </defs></svg>
    <span class="app-btn t1"><svg width="34" height="36" viewBox="0 0 34 36"><path d="M2 2h15v7H2zM2 10h15v21H2z" fill="#168de0" stroke="#fff" /><path d="M7.500 19.500h26v14h-26z" fill="#6f93ad" stroke="#fff" /><path d="M17 19v-3h7v3" fill="none" stroke="#fff" stroke-width="1.500" /><path d="M10 24.500h21m-18-2v4m15-4v4" stroke="#fff" /></svg></span>
    <span class="app-btn t2"><svg width="30" height="28" viewBox="0 0 30 28"><path d="M6 3h22l-4 21H2z" fill="#2e73b0" stroke="#a8cfe9" stroke-width="1.500" /><path d="M11 7l7 6-9 7M16 20h7" fill="none" stroke="#fff" stroke-width="2.500" /></svg></span>
    <span class="app-btn t3"><svg width="34" height="34" viewBox="0 0 34 34"><path d="M1.500 6h9l1 3h21v20h-31z" fill="#f2dc8c" stroke="#c9a84a" /><path d="M3 4h9v5H3zm10 2h8v4h-8zm8 2h9v4h-9z" fill="#f9f5e6" stroke="#bb9b50" stroke-width=".7" /><path d="M5 4h4v3H5z" fill="#36ad3e" /><path d="M14 6h3v3h-3z" fill="#d3442c" /><path d="M23 8h4v3h-4z" fill="#3b7fd0" /><path d="M6 31V20h22v11h-5v-6H11v6z" fill="#8ac6e6" stroke="#4f93bd" /><path d="M9 16v8m-4-4h8" stroke="#fff" /></svg></span>
    <span class="app-btn t4"><svg width="32" height="34" viewBox="0 0 32 34"><circle cx="16" cy="16" r="12" fill="url(#orb)" /><path d="M30 1Q14 8 8 18 3 26 3 31q-4 0-2-5Q8 7 30 1z" fill="url(#hot)" /><path d="M30 5Q14 14 13 23q-1 6-5 8-1-3 0-6Q12 12 30 5z" fill="url(#warm)" stroke="#fff" stroke-width=".5" /></svg></span>
    <span class="app-btn t5"><svg width="26" height="36" viewBox="0 0 26 36"><path d="M4 3q9-3 18 0 2 1 2 4v21q0 4-2 4-9 2-18 0-2 0-2-4V7q0-3 2-4z" fill="url(#red)" stroke="#2c0c0d" stroke-width="2" /><path d="M6 5q-1 14 1 26M10 4q-1 14 0 28M13 4q2 12-1 27M17 4q1 14-1 27M20 6q1 12-1 23" fill="none" stroke="#c2353a" /></svg></span>
    <span class="app-btn t6"><svg width="32" height="34" viewBox="0 0 32 34"><circle cx="16" cy="16" r="9" fill="url(#orb)" /><path d="M8 13h16M8 18h16M13 8q-3 8 1 17M19 8q3 8-1 17" fill="none" stroke="#9fc5f5" stroke-width=".6" /><path d="M2 2q24 8 29 28-4 2-7 0Q19 12 2 2z" fill="url(#hot)" /><path d="M30 2Q24 16 6 30l-5 1Q7 11 24 3z" fill="none" stroke="url(#warm)" stroke-width="2.500" /></svg></span>
    <span class="stack"></span><span class="stack"></span>
    <span class="app-btn t7"><svg width="32" height="34" viewBox="0 0 32 34"><path d="M4.500 2.500h26v26h-26z" fill="url(#teal)" stroke="#111" /><path d="M30 3l2 2-9 11 1 5-6 4 1 6q-3 3-6 0l-1-6q-5-2-6-7l-5-2q-1-3 2-3l6 2 7-2 4-1z" fill="#8ce8ea" stroke="#1c9aa5" stroke-width=".8" /></svg></span>
    <span class="app-btn t8"><svg width="32" height="34" viewBox="0 0 32 34"><circle cx="15" cy="17" r="10.500" fill="url(#orb)" /><path d="M24 2Q14 9 9 17q-4 7-5 11-5 0-3-7Q8 6 24 2z" fill="url(#hot)" /><path d="M25 6q8-2 6 5-4 13-21 21 9-8 13-16 2-5 2-10z" fill="url(#warm)" /></svg></span>
    <span class="app-btn t9"><svg width="32" height="34" viewBox="0 0 32 34"><circle cx="17" cy="16" r="13" fill="url(#orb)" /><path d="M30 2Q16 8 10 19q-3 6-3 12-4 2-6-1 0-7 5-14Q14 6 30 2z" fill="url(#hot)" /><path d="M30 8Q18 15 16 23q-2 6-6 9-2-3 0-9Q15 12 30 8z" fill="url(#warm)" stroke="#fff" stroke-width=".4" /></svg></span>
    <span class="fill"></span>
    <svg class="tray" width="84" height="20" viewBox="0 0 84 20">
      <path d="M0 10l3.500-4L7 10z" fill="#111" />
      <path d="M20.500 3v15M22 4h6l2 2h5v8h-5l-2-2h-6z" fill="#fff" stroke="#555" /><circle cx="31" cy="13" r="4.800" fill="#e0362c" /><path d="M29 11l4 4m0-4l-4 4" stroke="#fff" stroke-width="1.600" />
      <path d="M47 4h12v10H50V8h-3z" fill="#9fd9ee" stroke="#fff" stroke-width="2.500" /><path d="M46.500 3.500h13v11h-10" fill="none" stroke="#456" /><circle cx="47" cy="6" r="2" fill="#fff" stroke="#456" /><path d="M56 9l5 9H51z" fill="#f8bf22" stroke="#a47806" /><path d="M56 12v3m0 1v1" stroke="#000" stroke-width="1.500" />
      <path d="M68 8h3l5-5v14l-5-5h-3z" fill="#fff" stroke="#555" /><circle cx="79" cy="13" r="4.800" fill="#e0362c" /><path d="M77 11l4 4m0-4l-4 4" stroke="#fff" stroke-width="1.600" />
    </svg>
    <div class="clock"><span>11:04</span><span>04/08/2017</span></div>
  </div>
</div>

<style>
  :global(body) { margin: 0; background: #d8d8d8; }
  .app { width: 1920px; height: 1200px; display: flex; flex-direction: column; overflow: hidden; font: 11px "DejaVu Sans Condensed", "DejaVu Sans", sans-serif; color: #000; background: linear-gradient(90deg, #c6c6c6, #dedede); }
  .app :global(svg) { display: block; flex: none; }
  .titlebar { height: 22px; flex: none; background: #66c9e9; border-bottom: 1px solid #75afc8; display: flex; }
  .appicon { margin: 3px 0 0 2px; }
  .title { flex: 1; padding-left: 782px; font: 14.5px/23px "Open Sans", sans-serif; white-space: nowrap; letter-spacing: -0.25px; }
  .winbtns { display: flex; margin-right: 2px; height: 20px; }
  .wb { box-sizing: border-box; height: 20px; border: 1px solid #24404a; border-top: 0; border-right: 0; }
  .wb svg { width: 100%; height: 19px; }
  .min { width: 28px; }
  .res { width: 26px; }
  .close { width: 47px; background: #c35a50; border-right: 1px solid #24404a; }
  .menubar { height: 20px; flex: none; background: #f0f0f0; padding-left: 7px; display: flex; gap: 13.2px; font-size: 12px; line-height: 20px; }
  .toolbars { height: 84px; flex: none; box-sizing: border-box; padding: 1px 0 0 6px; display: flex; flex-direction: column; gap: 1px; }
  .row { display: flex; height: 26px; flex: none; }
  .strip { display: flex; height: 26px; flex: none; box-sizing: border-box; border-bottom: 1px solid #555; background: linear-gradient(#e6e6e6, #d6d6d6 50%, #b0b0b0); }
  .slot { width: 24px; height: 25px; flex: none; box-sizing: border-box; }
  .slot svg { width: 100%; height: 24px; margin-top: -1px; }
  .narrow { width: 15px; }
  .pressed { border: 1px solid #1c3a94; background: #c5c9dc; }
  .pressed svg { margin: -2px 0 0 -1px; width: 24px; }
  .sep { width: 1px; height: 20px; margin: 3px 1px 0; border-left: 1px solid #fff; background: #5f86cc; flex: none; }
  .label { width: 107px; padding-left: 2px; line-height: 25px; white-space: nowrap; letter-spacing: -0.1px; }
  .tail { width: 9px; }
  .tail6 { width: 6px; }
  .zoom { box-sizing: border-box; width: 58px; height: 21px; margin: 2px 7px 0 4px; border: 1px solid #666; background: #fff; display: flex; align-items: center; justify-content: space-between; padding: 0 3px 0 2px; }
  .second { width: 833px; }
  .third { width: 832px; }
  .fa { width: 24px; flex: none; background: #d5d5d5; }
  .sel { box-sizing: border-box; height: 21px; margin: 2px 0 0 3px; border: 1px solid #aaa; background: #fff; display: flex; align-items: center; justify-content: space-between; padding: 0 3px 0 1px; flex: none; }
  .sel b { background: #efefef; height: 17px; line-height: 17px; font-weight: normal; padding-left: 2px; box-sizing: border-box; }
  .font { width: 127px; }
  .font b { width: 106px; }
  .size { width: 60px; margin-right: 1px; color: #777; }
  .size b { width: 38px; }
  .lang { box-sizing: border-box; width: 128px; height: 21px; margin-top: 2px; border: 1px solid #aaa; background: #f2f2f2; display: flex; flex: none; font-family: "Noto Sans", sans-serif; }
  .lang span { flex: 1; padding-left: 5px; line-height: 19px; }
  .lang i { width: 15px; border-left: 1px solid #aaa; display: flex; align-items: center; justify-content: center; }
  main { height: 1005px; flex: none; display: flex; }
  aside { width: 264px; display: flex; flex-direction: column; border-right: 3px solid #fff; flex: none; }
  h2 { margin: 0; height: 24px; flex: none; border-bottom: 1px solid #555; background: linear-gradient(#eee, #bababa); font: bold 11px/26px "DejaVu Sans Condensed", sans-serif; padding-left: 7px; letter-spacing: -0.1px; }
  .tools { height: 110px; flex: none; box-sizing: border-box; background: linear-gradient(#e6e6e6, #dedede); padding: 3px 0 0 2px; display: grid; grid-template-columns: repeat(9, 24px); grid-auto-rows: 24px; gap: 2px 3px; align-content: start; }
  .tool { box-sizing: border-box; border: 1px solid #c4c4c4; border-radius: 3px; background: #ebebeb; }
  .tool svg { width: 24px; height: 24px; margin: -1px; }
  .on { background: #c5c5c5; border-color: #999 #fff #fff #999; }
  .tree { flex: 1; border: 1px solid #777b82; background: #fff; margin-top: 2px; padding-top: 1px; margin-right: 1px; }
  .node { height: 16px; display: flex; padding-left: 12px; line-height: 17px; white-space: nowrap; }
  .branch { width: 11px; height: 16px; background: repeating-linear-gradient(#888 0 1px, transparent 1px 2px) 0 0 / 1px 100% no-repeat, repeating-linear-gradient(90deg, #888 0 1px, transparent 1px 2px) 0 8px / 100% 1px no-repeat; }
  .first .branch { background-position: 0 8px, 0 8px; }
  .last .branch { background-size: 1px 50%, 100% 1px; }
  .node svg { margin-left: -2px; width: 20px; }
  .node span { height: 16px; margin-left: 0; padding: 0 1px 0 2px; letter-spacing: -0.2px; }
  .wide span { letter-spacing: 0.27px; }
  .node .picked { background: #3399ff; color: #fff; }
  .frame { width: 1650px; flex: none; box-sizing: border-box; padding: 6px 7px 7px 3px; background: #868686; border: 1px solid #555; box-shadow: inset 0 0 0 2px #777; }
  .canvas { position: relative; width: 1637px; height: 988px; background: #666; border: 1px solid #111; border-width: 1px 2px 2px 1px; overflow: hidden; }
  .card { position: absolute; box-sizing: border-box; background: #fff; border: 1px solid #111; border-radius: 5px; font-family: "Liberation Sans", Arial, sans-serif; }
  .reduce { left: 0; top: 0; width: 111px; height: 40px; display: flex; align-items: center; font-size: 12px; gap: 10px; padding: 2px 0 0 4px; letter-spacing: .3px; }
  .caret { font-style: normal; letter-spacing: -0.3px; }
  .small .sign { width: 22px; height: 20px; }
  .panel { left: 0; top: 40px; width: 401px; height: 111px; }
  .panel strong { position: absolute; left: 6px; top: 2px; font-size: 16px; line-height: 20px; white-space: nowrap; letter-spacing: -0.11px; }
  .raz { position: absolute; left: 307px; top: 3px; width: 38px; height: 15px; background: #d4d4d4; border: 1px solid #eee; border-right: 2px solid #888; border-bottom: 2px solid #888; font-size: 11.500px; line-height: 16px; text-align: center; }
  .x { position: absolute; left: 383px; top: 3px; color: #b80000; font-size: 13px; line-height: 17px; }
  .item { position: absolute; top: 27px; width: 61px; height: 75px; display: flex; flex-direction: column; align-items: center; font-size: 11px; }
  .sign { width: 41px; height: 35px; }
  .info { box-sizing: border-box; width: 61px; height: 18px; margin-top: 5px; background: #999; border: 1px solid #808080; color: #fff; line-height: 17px; text-align: center; letter-spacing: .1px; white-space: nowrap; }
  .fin { box-sizing: border-box; width: 61px; height: 15px; margin-top: 1px; background: #d4d4d4; border: 1px solid #e8e8e8; border-right: 2px solid #888; border-bottom: 2px solid #888; line-height: 15px; text-align: center; }
  .selection { position: absolute; left: 310px; top: 7px; }
  .status { margin-top: 6px; height: 22px; flex: none; box-sizing: border-box; border-top: 1px solid #999; background: #fff; display: flex; padding-top: 2px; }
  .cell { box-sizing: border-box; height: 19px; border: 1px solid #a0a0a0; line-height: 17px; white-space: nowrap; margin-right: 4px; flex: none; }
  .msg { width: 1445px; letter-spacing: -0.17px; }
  .c1 { width: 18px; margin-right: 4px; }
  .c2 { width: 56px; text-align: center; }
  .c3 { width: 46px; text-align: center; }
  .c4 { width: 71px; }
  .c5 { width: 246px; display: flex; gap: 12px; }
  .grip { margin: 8px 0 0 5px; }
  .taskbar { height: 40px; flex: none; box-sizing: border-box; border-top: 1px solid #555; border-bottom: 1px solid #555; background: #66c9e9; display: flex; padding-left: 16px; }
  .defs { position: absolute; }
  .app-btn { box-sizing: border-box; height: 38px; background: #79d0ec; border: 1px solid #3f7486; border-width: 0 1px; display: flex; align-items: center; justify-content: center; flex: none; }
  .t1 { width: 60px; }
  .t2 { width: 64px; background: none; border: 0; }
  .t3 { width: 60px; }
  .t4 { width: 64px; background: none; border: 0; }
  .t5 { width: 60px; }
  .t6 { width: 52px; margin-left: 2px; background: #9fdcf2; }
  .stack { width: 3px; background: #9fdcf2; border-right: 1px solid #3f7486; }
  .t7 { width: 60px; margin-left: 2px; }
  .t8 { width: 60px; margin-left: 2px; }
  .t9 { width: 60px; margin-left: 2px; }
  .fill { flex: 1; }
  .tray { margin: 9px 16px 0 0; }
  .clock { width: 62px; margin-right: 24px; display: flex; flex-direction: column; align-items: center; font: 12px/17px "Open Sans", sans-serif; padding-top: 2px; letter-spacing: -0.4px; }
</style>
